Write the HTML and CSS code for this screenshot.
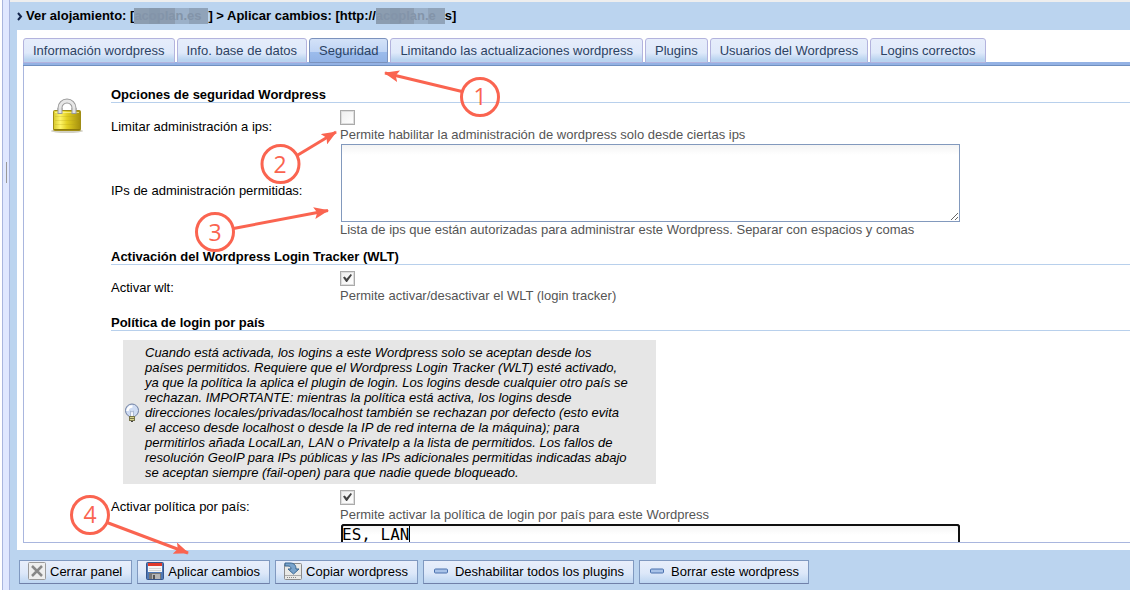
FILE: index.html
```html
<!DOCTYPE html>
<html lang="es">

<head>
    <meta charset="UTF-8" />
    <meta name="viewport" content="width=device-width, initial-scale=1.0" />
    <title>Aplicar cambios</title>
    <link rel="stylesheet" href="styles.css">
</head>

<body>

    <div class="app">
        <div class="splitter"><span class="splitter-grip"></span></div>

        <div class="main">
            <header class="title-bar">
                <svg class="chevron" width="6" height="9" viewBox="0 0 6 9"><path d="M1 1l3 3.5L1 8" fill="none" stroke="#14264c" stroke-width="2" /></svg>
                <h1>Ver alojamiento: [<span class="masked">acoplan.es</span>] &gt; Aplicar cambios: [http://<span class="masked masked-short">acoplan.e</span>s]</h1>
            </header>

            <div class="content">
                <nav class="tabs">
                    <a class="tab" href="#info">Información wordpress</a>
                    <a class="tab" href="#bd">Info. base de datos</a>
                    <a class="tab active" href="#seguridad">Seguridad</a>
                    <a class="tab" href="#limites">Limitando las actualizaciones wordpress</a>
                    <a class="tab" href="#plugins">Plugins</a>
                    <a class="tab" href="#usuarios">Usuarios del Wordpress</a>
                    <a class="tab" href="#logins">Logins correctos</a>
                </nav>

                <div class="panel">
                    <div class="panel-icon">
                        <svg width="34" height="36" viewBox="0 0 34 36">
                            <defs>
                                <linearGradient id="gold" x1="0" x2="1" y1="0" y2="0">
                                    <stop offset="0" stop-color="#d8c92c" />
                                    <stop offset=".25" stop-color="#fff56a" />
                                    <stop offset=".5" stop-color="#e2cf22" />
                                    <stop offset="1" stop-color="#a48f0c" />
                                </linearGradient>
                            </defs>
                            <ellipse cx="17" cy="33" rx="16" ry="2" fill="#d2d0c4" />
                            <path d="M10 17V10a7 7 0 0 1 14 0v7" fill="none" stroke="#999" stroke-width="5" />
                            <path d="M10 17V10a7 7 0 0 1 14 0v7" fill="none" stroke="#e6e6e6" stroke-width="3" />
                            <rect x="3.500" y="12.500" width="27" height="20" rx="1" fill="url(#gold)" stroke="#a08d16" />
                            <path d="M5 14.500h24" stroke="#fff9a0" opacity=".7" />
                            <path d="M5 18.500h24M5 22.500h24M5 26.500h24" stroke="#b5a01a" opacity=".25" />
                            <path d="M4 31.500h26" stroke="#8e7b0c" />
                            <path d="M10 10v6M24 10v6" stroke="#999" stroke-width="5" />
                            <path d="M10 10v5M24 10v5" stroke="#e2e2e2" stroke-width="3" />
                        </svg>
                    </div>

                    <form class="form" id="formSeguridad">
                        <h2>Opciones de seguridad Wordpress</h2>
                        <div class="row">
                            <label for="limitarIps">Limitar administración a ips:</label>
                            <div class="field">
                                <input type="checkbox" id="limitarIps" />
                                <p class="hint">Permite habilitar la administración de wordpress solo desde ciertas ips</p>
                            </div>
                        </div>
                        <div class="row row-text">
                            <label for="ips">IPs de administración permitidas:</label>
                            <div class="field">
                                <textarea id="ips"></textarea>
                                <p class="hint">Lista de ips que están autorizadas para administrar este Wordpress. Separar con espacios y comas</p>
                            </div>
                        </div>

                        <h2>Activación del Wordpress Login Tracker (WLT)</h2>
                        <div class="row">
                            <label for="wlt">Activar wlt:</label>
                            <div class="field">
                                <input type="checkbox" id="wlt" checked />
                                <p class="hint">Permite activar/desactivar el WLT (login tracker)</p>
                            </div>
                        </div>

                        <h2>Política de login por país</h2>
                        <div class="note">
                            <svg width="16" height="20" viewBox="0 0 16 20">
                                <circle cx="8" cy="7.500" r="6.500" fill="#cfdcf3" stroke="#6f80a3" />
                                <path d="M3.500 8a4.500 4.500 0 0 1 5-4.500" fill="none" stroke="#fff" stroke-width="2.500" />
                                <path d="M6.500 14V8l1.500 1 1.500-1v6" fill="#f4f7fd" stroke="#9aa8c4" stroke-width=".7" />
                                <rect x="5.500" y="13.500" width="5" height="4" fill="#d9d58c" stroke="#77744a" />
                                <path d="M6 15.500h4" stroke="#77744a" />
                                <path d="M7 18.500h2" stroke="#444" />
                            </svg>
                            <p>Cuando está activada, los logins a este Wordpress solo se aceptan desde los países permitidos. Requiere que el Wordpress Login Tracker (WLT) esté activado, ya que la política la aplica el plugin de login. Los logins desde cualquier otro país se rechazan. IMPORTANTE: mientras la política está activa, los logins desde direcciones locales/privadas/localhost también se rechazan por defecto (esto evita el acceso desde localhost o desde la IP de red interna de la máquina); para permitirlos añada LocalLan, LAN o PrivateIp a la lista de permitidos. Los fallos de resolución GeoIP para IPs públicas y las IPs adicionales permitidas indicadas abajo se aceptan siempre (fail-open) para que nadie quede bloqueado.</p>
                        </div>
                        <div class="row">
                            <label for="politica">Activar política por país:</label>
                            <div class="field">
                                <input type="checkbox" id="politica" checked />
                                <p class="hint">Permite activar la política de login por país para este Wordpress</p>
                            </div>
                        </div>
                        <div class="row row-text row-unlabeled">
                            <div class="field">
                                <textarea class="current" aria-label="Países permitidos" spellcheck="false">ES, LAN</textarea>
                                <span class="caret"></span>
                            </div>
                        </div>
                    </form>
                </div>
            </div>

            <footer class="actions">
                <button type="button">
                    <svg width="18" height="18" viewBox="0 0 18 18">
                        <rect x=".5" y=".5" width="17" height="17" rx="1" fill="#eee" stroke="#9a9a9a" />
                        <path d="M4 4l10 10M14 4L4 14" stroke="#888" stroke-width="2.500" />
                    </svg>
                    Cerrar panel
                </button>
                <button type="button">
                    <svg width="18" height="18" viewBox="0 0 18 18">
                        <rect x=".5" y=".5" width="17" height="17" rx="1" fill="#4f78b5" stroke="#36568c" />
                        <rect x="2" y="1" width="14" height="9" fill="#f6f6f6" />
                        <rect x="2" y="1" width="14" height="3" fill="#e0392b" />
                        <path d="M3 6.500h12M3 8.500h12" stroke="#d5d5d5" />
                        <rect x="3" y="11" width="12" height="6" fill="#777" />
                        <rect x="6" y="12" width="8" height="5" fill="#b5b5b5" />
                        <rect x="7" y="13" width="2" height="4" fill="#555" />
                    </svg>
                    Aplicar cambios
                </button>
                <button type="button">
                    <svg width="18" height="18" viewBox="0 0 18 18">
                        <rect x=".5" y="1.500" width="17" height="16" rx="1" fill="#e9e9e6" stroke="#8c8c8c" />
                        <path d="M1 13.500h16" stroke="#aaa" />
                        <path d="M3 15.500h1M5 15.500h1M7 15.500h1M9 15.500h1M11 15.500h1" stroke="#888" />
                        <path d="M1 1h5c4 0 6 2 6 6h3l-5.500 5L4 7h3c0-2-1-3-3-3H1z" fill="#79a3cb" stroke="#376490" />
                    </svg>
                    Copiar wordpress
                </button>
                <button type="button" class="remove">
                    <svg width="14" height="6" viewBox="0 0 14 6"><rect x=".5" y="1" width="13" height="4" rx="1" fill="#a8c2e8" stroke="#4a70ad" /></svg>
                    Deshabilitar todos los plugins
                </button>
                <button type="button" class="remove">
                    <svg width="14" height="6" viewBox="0 0 14 6"><rect x=".5" y="1" width="13" height="4" rx="1" fill="#a8c2e8" stroke="#4a70ad" /></svg>
                    Borrar este wordpress
                </button>
            </footer>
        </div>

        <!-- Pasos numerados sobre la pantalla -->
        <svg class="steps" width="520" height="590" viewBox="0 0 520 590">
            <defs>
                <marker id="arrow" viewBox="0 0 15 12" refX="14" refY="6" markerWidth="15" markerHeight="12" markerUnits="userSpaceOnUse" orient="auto">
                    <path d="M0 0l15 6L0 12l3-6z" fill="#fa6450" />
                </marker>
            </defs>
            <g fill="none" stroke="#fa6450" stroke-width="3">
                <circle cx="480" cy="97" r="18.500" />
                <circle cx="280.500" cy="164" r="18.500" />
                <circle cx="215" cy="232" r="18.500" />
                <circle cx="90" cy="515" r="18.500" />
                <path d="M462 91.500L385 73" marker-end="url(#arrow)" />
                <path d="M297 155.500L336 132" marker-end="url(#arrow)" />
                <path d="M233.500 228.500L328 210.500" marker-end="url(#arrow)" />
                <path d="M107 522.500L188 553" marker-end="url(#arrow)" />
            </g>
            <g class="step-number">
                <text x="480" y="105">1</text>
                <text x="280" y="173">2</text>
                <text x="215" y="241">3</text>
                <text x="90" y="523">4</text>
            </g>
        </svg>
    </div>

</body>

</html>
```
FILE: styles.css
```css
* {
    box-sizing: border-box;
    margin: 0;
    padding: 0;
}

body {
    font-family: "Liberation Sans", Arial, sans-serif;
    font-size: 13px;
    line-height: 15px;
    color: #000;
    background: #fff;
}

.app {
    position: relative;
    display: flex;
    height: 100vh;
    padding-left: 2px;
    overflow: hidden;
}

.splitter {
    display: flex;
    align-items: flex-start;
    width: 8px;
    padding: 162px 0 0 3px;
    background: #e0e8ff;
    border: solid #a9b6de;
    border-width: 0 1px;
}

.splitter-grip {
    width: 1px;
    height: 21px;
    background: #999;
}

.main {
    flex: 1;
    min-width: 0;
    display: flex;
    flex-direction: column;
    background: #bbd4ef;
    border-top: 2px solid #eee;
}

.title-bar {
    display: flex;
    align-items: center;
    gap: 3px;
    height: 28px;
    padding-left: 7px;
}

h1,
h2 {
    font-size: 13px;
    line-height: 15px;
    white-space: nowrap;
}

.masked {
    display: inline-block;
    width: 74px;
    height: 16px;
    overflow: hidden;
    vertical-align: middle;
    color: #8394a9;
    background: linear-gradient(90deg, #8c9db0 0 20%, #8799ad 20% 35%, #8d9db1 35% 55%, #9bb0c8 55% 75%, #90a3b9 75%);
}

.masked-short {
    width: 69px;
}

.content {
    flex: 1;
    min-height: 0;
    display: flex;
    flex-direction: column;
    margin-left: 7px;
    padding: 8px 0 7px 6px;
    background: #fff;
}

.tabs {
    display: flex;
    flex-shrink: 0;
    gap: 2px;
    height: 28px;
    border-bottom: 1px solid #7090c0;
    box-shadow: inset 0 -3px #94b2e4;
}

.tab {
    height: 25px;
    padding: 4px 9px 0;
    border: 1px solid #b3b3dd;
    border-radius: 3px 3px 0 0;
    color: #2b4263;
    background: linear-gradient(#e6edfb, #dfe9fa 60%, #bad4f0 90%);
    text-decoration: none;
    white-space: nowrap;
}

.tab.active {
    border-color: #7c92bd;
    background: linear-gradient(#d3e2f8, #c0d5f5 55%, #9cbcec 56%, #92b3e6);
}

.panel {
    flex: 1;
    min-height: 0;
    display: flex;
    overflow: hidden;
    border: solid #a9b6de;
    border-width: 0 0 1px 1px;
}

.panel-icon {
    flex: 0 0 87px;
    padding: 32px 0 0 26px;
}

.form {
    flex: 1;
    min-width: 0;
    padding-top: 21px;
}

h2 {
    margin-bottom: 6px;
    border-bottom: 1px solid #b8d0ec;
}

h2:first-child {
    margin-bottom: 7px;
}

.row {
    display: flex;
    align-items: center;
}

.row label {
    flex: 0 0 229px;
}

.row-text {
    padding-top: 2px;
}

.row-unlabeled {
    padding-left: 229px;
}

.row + h2 {
    margin-top: 12px;
}

.field {
    position: relative;
    flex: 1;
    min-width: 0;
}

.hint {
    color: #555;
}

input[type="checkbox"] {
    appearance: none;
    display: block;
    width: 15px;
    height: 15px;
    margin-bottom: 2px;
    border: 1px solid #aaa;
    background: linear-gradient(135deg, #eee, #fff);
    box-shadow: inset 0 0 0 1px #ddd;
}

input[type="checkbox"]:checked::before {
    content: "";
    display: block;
    width: 9px;
    height: 8px;
    margin: 2px;
    background: #444;
    clip-path: polygon(0 45%, 20% 30%, 40% 60%, 85% 0, 100% 12%, 45% 100%, 35% 100%);
}

textarea {
    display: block;
    width: 619px;
    max-width: 100%;
    height: 78px;
    margin-left: 1px;
    border: 1px solid #8299bd;
    background: linear-gradient(#f4f4f4, #fff 10px);
    font: 16px/19px "DejaVu Sans Mono", monospace;
    outline: none;
}

textarea.current {
    border-color: #101010;
    border-radius: 3px;
    outline: 2px solid #101010;
    outline-offset: -2px;
}

.caret {
    position: absolute;
    top: 2px;
    left: 69px;
    width: 1px;
    height: 18px;
    background: #000;
}

.note {
    display: flex;
    align-items: center;
    gap: 5px;
    width: 533px;
    max-width: 100%;
    margin: 9px 0 6px 12px;
    padding: 5px 26px 4px 1px;
    background: #e6e6e6;
    font-style: italic;
}

.note svg {
    flex-shrink: 0;
}

.actions {
    display: flex;
    align-items: center;
    gap: 5px;
    height: 40px;
    padding: 3px 0 0 9px;
}

.actions button {
    display: flex;
    align-items: center;
    gap: 4px;
    height: 24px;
    padding: 0 9px 1px 8px;
    border: 1px solid #8099c0;
    border-bottom-color: #7080a8;
    background: linear-gradient(#e8eefb, #dde8f9 55%, #bcd5f1);
    font: 13px/15px "Liberation Sans", Arial, sans-serif;
    color: #000;
    white-space: nowrap;
    cursor: pointer;
}

.actions .remove {
    gap: 7px;
    padding-left: 10px;
}

.steps {
    position: absolute;
    top: 0;
    left: 0;
    pointer-events: none;
}

.step-number {
    font: 23px "Open Sans", "Noto Sans", sans-serif;
    fill: #fa6450;
    text-anchor: middle;
}
```
